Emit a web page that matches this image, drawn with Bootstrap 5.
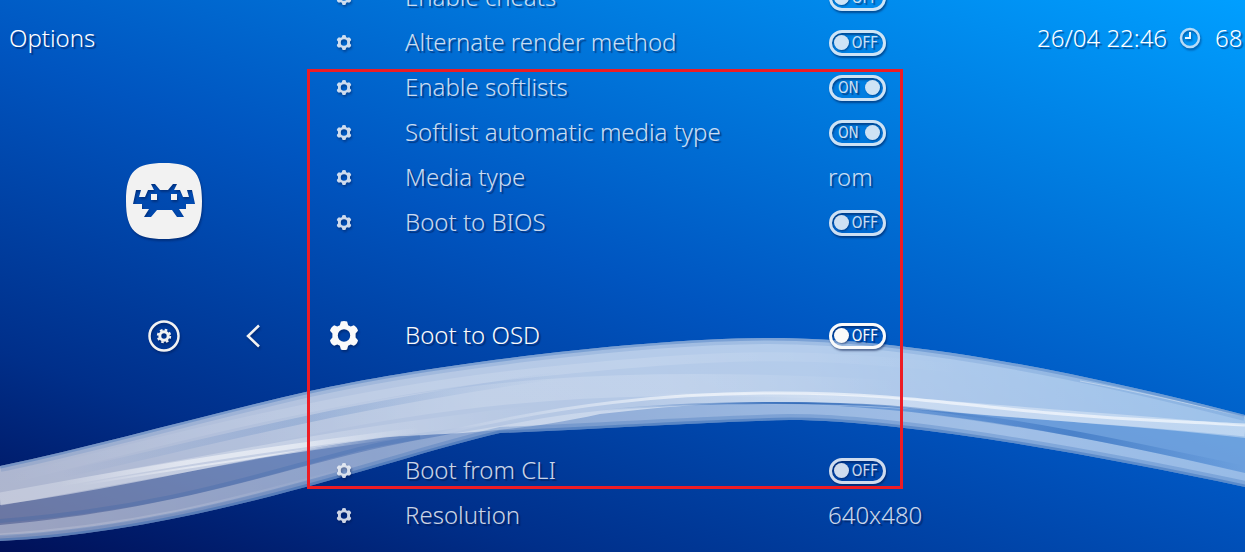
<!DOCTYPE html>
<html lang="en">
<head>
<meta charset="utf-8">
<meta name="viewport" content="width=device-width, initial-scale=1">
<title>Options</title>
<link href="https://cdn.jsdelivr.net/npm/bootstrap@5.3.0/dist/css/bootstrap.min.css" rel="stylesheet">
<style>
  body {
    font-family: "Noto Sans", "Open Sans", sans-serif;
    font-weight: 300;
    font-size: 24px;
    line-height: 30px;
    color: #fff;
    background: linear-gradient(20deg, #001058 0%, #002f8a 20%, #0055c0 50%, #007ce0 76%, #009fff 100%);
    text-shadow: 2px 2px 1px rgba(0, 20, 70, .5);
  }
  svg { filter: drop-shadow(1px 2px 1px rgba(0, 20, 70, .45)); }
  .ribbon { filter: none; }
  .screen { display: grid; grid-template-columns: minmax(0, 307fr) minmax(0, 596fr) minmax(0, 342fr); }
  .title { font-size: 24px; line-height: 30px; font-weight: 300; padding: 23px 0 0 9px; }
  .tabs { width: 76px; margin: 110px 0 0 126px; }
  .crumb { margin-top: 80px; padding-left: 22px; }
  .crumb svg:last-child { margin-left: 66px; }
  .settings { margin-top: -25px; }
  .setting { height: 45px; color: rgba(240, 243, 248, .86); }
  .setting > svg { flex: 0 0 74px; }
  .setting .name { flex: 0 0 423px; margin-left: 24px; }
  .setting > span { padding-bottom: 2px; }
  .setting.active { margin: 68px 0 90px; color: #fafafa; }
  .marked::after { content: ""; position: absolute; inset: 4px 0; border: 3px solid #ed1c24; pointer-events: none; }
  .switcher { width: 57px; height: 26px; border: 3px solid currentColor; border-radius: 13px; padding: 0 5px 0 2px; margin-left: 1px;
    font: 400 15px/20px "Liberation Sans Narrow", "DejaVu Sans Condensed", sans-serif; box-shadow: 1px 2px 2px rgba(0, 20, 70, .5), inset 1px 2px 2px rgba(0, 20, 70, .5); }
  .knob { width: 15px; height: 15px; border-radius: 50%; background: currentColor; box-shadow: 1px 1px 2px rgba(0, 20, 70, .5); }
  .switcher input:checked ~ .knob { order: 2; }
  .switcher:has(input:checked) { padding: 0 3px 0 6px; }
  .status { padding: 23px 0 0 134px; }
  .clock { margin: 0 14px 0 12px; }
</style>
</head>
<body class="min-vh-100 position-relative overflow-hidden">
<svg width="0" height="0" class="position-absolute" aria-hidden="true">
  <symbol id="gear" viewBox="0 0 28 28">
    <path fill="currentColor" fill-rule="evenodd" d="M11 .5 Q14 -.5 17 .5 L18 4 L20.500 5.200 L23.500 4 Q27 6 27.500 9.500 L25.200 12 V16 L27.500 18.500 Q27 22 23.500 24 L20.500 22.800 L18 24 L17 27.500 Q14 28.500 11 27.500 L10 24 L7.500 22.800 L4.500 24 Q1 22 .5 18.500 L2.800 16 V12 L.5 9.500 Q1 6 4.500 4 L7.500 5.200 L10 4 Z M14 8 A6 6 0 1 0 14 20 A6 6 0 1 0 14 8 Z"/>
  </symbol>
</svg>
<svg class="ribbon position-absolute top-0 start-0 w-100 h-100" viewBox="0 0 1245 552" preserveAspectRatio="none" aria-hidden="true">
  <defs>
    <linearGradient id="veil"><stop offset="0" stop-color="#fff" stop-opacity=".6"/><stop offset=".35" stop-color="#fff" stop-opacity=".68"/><stop offset=".65" stop-color="#fff" stop-opacity=".66"/><stop offset="1" stop-color="#fff" stop-opacity=".45"/></linearGradient>
    <linearGradient id="low"><stop offset="0" stop-color="#fff" stop-opacity=".6"/><stop offset=".3" stop-color="#fff" stop-opacity=".42"/><stop offset=".5" stop-color="#fff" stop-opacity=".5"/><stop offset=".8" stop-color="#fff" stop-opacity=".66"/><stop offset="1" stop-color="#fff" stop-opacity=".55"/></linearGradient>
    <linearGradient id="both"><stop offset="0" stop-color="#fff" stop-opacity="0"/><stop offset=".35" stop-color="#fff"/><stop offset=".65" stop-color="#fff"/><stop offset="1" stop-color="#fff" stop-opacity="0"/></linearGradient>
    <linearGradient id="rise"><stop offset="0" stop-color="#fff" stop-opacity="0"/><stop offset=".3" stop-color="#fff"/><stop offset="1" stop-color="#fff"/></linearGradient>
    <linearGradient id="fall"><stop offset="0" stop-color="#fff"/><stop offset=".5" stop-color="#fff"/><stop offset="1" stop-color="#fff" stop-opacity="0"/></linearGradient>
    <linearGradient id="shade"><stop offset="0" stop-color="#0d4faa" stop-opacity="0"/><stop offset=".5" stop-color="#0d4faa"/><stop offset="1" stop-color="#0d4faa" stop-opacity="0"/></linearGradient>
    <clipPath id="shape"><path d="M0 466 C100 445 200 416 310 391 S640 338 770 338 S1060 367 1245 415 V487 C1100 456 903 420 790 420 C700 422 600 429 500 433 C400 455 200 532 0 541 Z"/></clipPath>
  </defs>
  <g clip-path="url(#shape)">
    <path fill="#fff" fill-opacity=".42" d="M0 330 H1245 V552 H0 Z"/>
    <path fill="url(#veil)" fill-opacity=".75" d="M0 330 H1245 V438 C1120 424 1000 418 900 407 C780 397 700 403 600 414 C500 436 430 433 380 438 C260 454 140 485 0 505 Z"/>
    <path fill="url(#low)" fill-opacity=".55" d="M0 525 C140 512 230 486 310 465 S430 437 500 426 C620 402 720 402 800 404 C960 410 1100 440 1245 473 V552 H0 Z"/>
    <g fill="none">
      <path stroke="url(#fall)" stroke-width="13" stroke-opacity=".25" d="M0 499 C110 479 200 463 300 445 S450 423 540 411"/>
      <path stroke="url(#both)" stroke-width="5" stroke-opacity=".5" d="M60 484 C180 463 270 448 420 430"/>
      <path stroke="url(#both)" stroke-width="2" stroke-opacity=".5" d="M80 485 C180 468 270 455 400 437"/>
      <path stroke="url(#rise)" stroke-width="3" stroke-opacity=".6" d="M430 436 C560 404 670 393 780 393 S960 405 1050 413 S1180 421 1245 425"/>
      <path stroke="url(#rise)" stroke-width="11" stroke-opacity=".32" d="M640 400 C860 393 980 410 1080 417 S1200 427 1245 431"/>
      <path stroke="#fff" stroke-width="1" stroke-opacity=".5" d="M1080 381 C1130 390 1190 404 1245 417"/>
      <path stroke="url(#both)" stroke-width="22" stroke-opacity=".16" d="M250 436 C460 390 620 374 900 392"/>
      <path stroke="url(#both)" stroke-width="9" stroke-opacity=".14" d="M0 482 C180 435 360 390 540 372 S800 350 970 370"/>
      <path stroke="url(#fall)" stroke-width="3" stroke-opacity=".14" d="M0 535 C160 524 250 494 370 463"/>
    </g>
    <g fill="none" stroke="#0d4faa">
      <path stroke-width="12" stroke-opacity=".12" d="M0 466 C100 445 200 416 310 391 S640 338 770 338 S1060 367 1245 415"/>
      <path stroke-width="5" stroke-opacity=".25" d="M0 466 C100 445 200 416 310 391 S640 338 770 338 S1060 367 1245 415"/>
      <path stroke-width="12" stroke-opacity=".2" d="M1245 487 C1100 456 903 420 790 420 C700 422 600 429 500 433 C400 455 200 532 0 541"/>
      <path stroke-width="5" stroke-opacity=".3" d="M1245 487 C1100 456 903 420 790 420 C700 422 600 429 500 433 C400 455 200 532 0 541"/>
      <path stroke="url(#shade)" stroke-width="7" stroke-opacity=".16" d="M60 475 C220 440 330 408 560 375"/>
      <path stroke-width="4" stroke-opacity=".15" d="M0 521 C140 510 230 484 310 462 S380 445 420 437"/>
      <path stroke="url(#shade)" stroke-width="2" stroke-opacity=".7" d="M600 411 C680 402 780 402 840 404 S920 408 1000 420"/>
      <path stroke="url(#shade)" stroke-width="6" stroke-opacity=".35" d="M900 408 C1050 425 1150 449 1245 469"/>
    </g>
  </g>
</svg>

<main class="screen position-relative">
  <aside>
    <h1 class="title mb-0">Options</h1>
    <div class="tabs">
      <svg class="d-block" width="76" height="76" viewBox="0 0 76 76" role="img" aria-label="RetroArch">
        <path fill="#f2f2f2" fill-rule="evenodd" d="M38 0 C66 0 76 8 76 38 S66 76 38 76 S0 68 0 38 S10 0 38 0 Z M10 27 L7 41 H16 V46 H23 L18 54 H25 L31 47 H46 L51 54 H58 L53 46 H60 V41 H69 L66 27 H61 L63 34 H57 L54 27 H48 L51 21 H47 L42 27 H34 L29 21 H25 L28 27 H22 L19 34 H13 L15 27 Z M25 31 V37 H31 V31 Z M45 31 V37 H51 V31 Z"/>
      </svg>
      <div class="crumb d-flex align-items-center">
        <svg class="flex-shrink-0" width="32" height="34" viewBox="0 0 32 34" aria-hidden="true">
          <circle cx="16" cy="17" r="14.500" fill="none" stroke="#f2f2f2" stroke-width="2.500"/>
          <circle cx="16" cy="17" r="4.200" fill="none" stroke="#f2f2f2" stroke-width="3"/>
          <circle cx="16" cy="17" r="6.200" fill="none" stroke="#f2f2f2" stroke-width="2" stroke-dasharray="2.600 2.270"/>
        </svg>
        <svg class="flex-shrink-0" width="16" height="24" viewBox="0 0 16 24" aria-hidden="true"><path d="M13 1.500 L2 12 L13 22.500" fill="none" stroke="#f2f2f2" stroke-width="2.500"/></svg>
      </div>
    </div>
  </aside>

  <section class="settings text-nowrap">
    <div class="setting d-flex align-items-center"><svg height="15"><use href="#gear"/></svg><span class="name">Enable cheats</span><label class="switcher d-flex align-items-center justify-content-between"><input class="visually-hidden" type="checkbox" aria-label="Enable cheats"><span class="knob"></span><span>OFF</span></label></div>
    <div class="setting d-flex align-items-center"><svg height="15"><use href="#gear"/></svg><span class="name">Alternate render method</span><label class="switcher d-flex align-items-center justify-content-between"><input class="visually-hidden" type="checkbox" aria-label="Alternate render method"><span class="knob"></span><span>OFF</span></label></div>
    <div class="marked position-relative">
      <div class="setting d-flex align-items-center"><svg height="15"><use href="#gear"/></svg><span class="name">Enable softlists</span><label class="switcher d-flex align-items-center justify-content-between"><input class="visually-hidden" type="checkbox" checked aria-label="Enable softlists"><span class="knob"></span><span>ON</span></label></div>
      <div class="setting d-flex align-items-center"><svg height="15"><use href="#gear"/></svg><span class="name">Softlist automatic media type</span><label class="switcher d-flex align-items-center justify-content-between"><input class="visually-hidden" type="checkbox" checked aria-label="Softlist automatic media type"><span class="knob"></span><span>ON</span></label></div>
      <div class="setting d-flex align-items-center"><svg height="15"><use href="#gear"/></svg><span class="name">Media type</span><span>rom</span></div>
      <div class="setting d-flex align-items-center"><svg height="15"><use href="#gear"/></svg><span class="name">Boot to BIOS</span><label class="switcher d-flex align-items-center justify-content-between"><input class="visually-hidden" type="checkbox" aria-label="Boot to BIOS"><span class="knob"></span><span>OFF</span></label></div>
      <div class="setting active d-flex align-items-center"><svg height="29"><use href="#gear"/></svg><span class="name">Boot to OSD</span><label class="switcher d-flex align-items-center justify-content-between"><input class="visually-hidden" type="checkbox" aria-label="Boot to OSD"><span class="knob"></span><span>OFF</span></label></div>
      <div class="setting d-flex align-items-center"><svg height="15"><use href="#gear"/></svg><span class="name">Boot from CLI</span><label class="switcher d-flex align-items-center justify-content-between"><input class="visually-hidden" type="checkbox" aria-label="Boot from CLI"><span class="knob"></span><span>OFF</span></label></div>
    </div>
    <div class="setting d-flex align-items-center"><svg height="15"><use href="#gear"/></svg><span class="name">Resolution</span><span>640x480</span></div>
  </section>

  <div class="status d-flex align-items-start text-nowrap">
    <span>26/04 22:46</span>
    <svg class="clock flex-shrink-0" width="22" height="30" viewBox="0 0 22 30" aria-hidden="true"><circle cx="11" cy="15" r="9" fill="none" stroke="#b8dcf8" stroke-width="2.500"/><path d="M11 9 V15 H6" fill="none" stroke="#e8f5ff" stroke-width="2"/></svg>
    <span>68</span>
  </div>
</main>
<script src="https://cdn.jsdelivr.net/npm/bootstrap@5.3.0/dist/js/bootstrap.bundle.min.js"></script>
</body>
</html>
